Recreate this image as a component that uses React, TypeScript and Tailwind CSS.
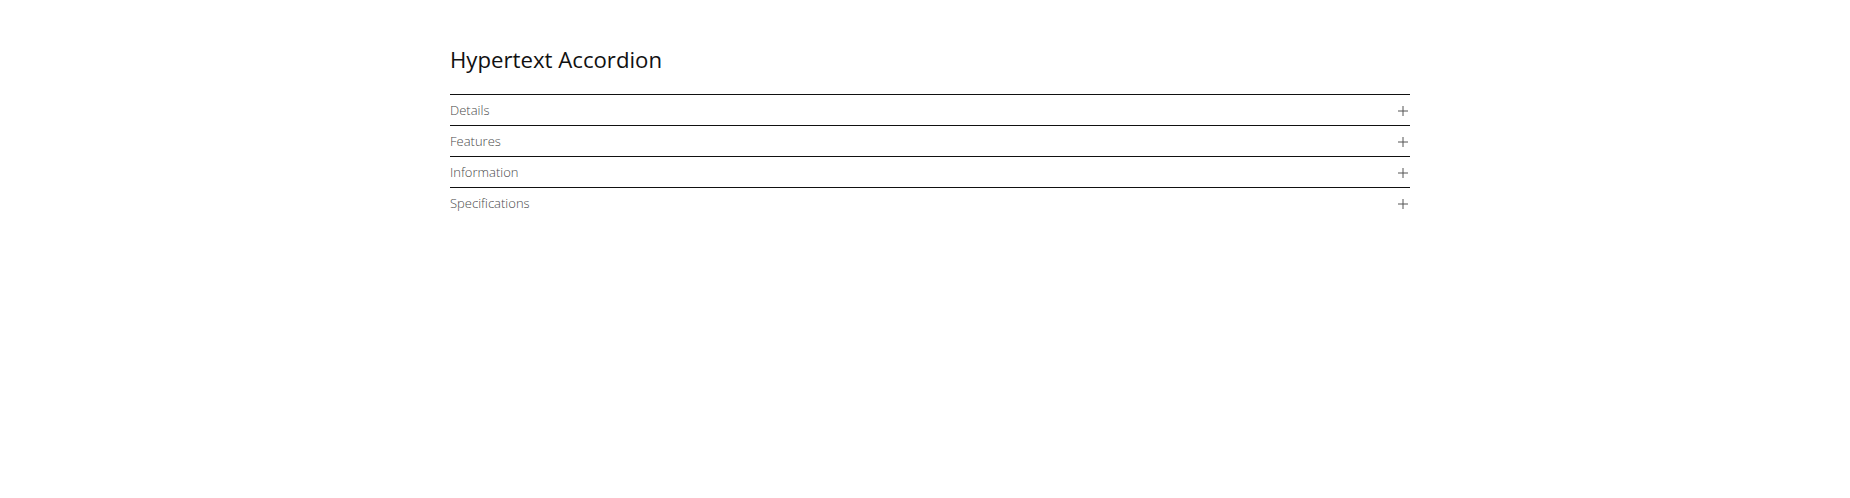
import { useState } from 'react'

const SECTIONS = ['Details', 'Features', 'Information', 'Specifications']

function PlusIcon() {
  return (
    <svg width="10" height="10" viewBox="0 0 10 10" className="shrink-0">
      <path d="M0 5h10M5 0v10" stroke="#555" strokeWidth="1" />
    </svg>
  )
}

export default function App() {
  const [open, setOpen] = useState<number | null>(null)

  return (
    <div className="min-h-screen bg-white font-['Open_Sans',sans-serif]">
      <div className="ml-[450px] w-[960px] pt-[45px]">
        <h1 className="text-[22.2px] leading-[30px] font-medium text-[#111]">Hypertext Accordion</h1>
        <div className="mt-[19px]">
          {SECTIONS.map((name, i) => (
            <div key={name} className="border-t-[1.5px] border-[#111]">
              <button
                onClick={() => setOpen(open === i ? null : i)}
                className="flex w-full items-center justify-between h-[30px] pt-[2px] text-left"
              >
                <span className="text-[13px] font-light text-[#4a4a4a]">{name}</span>
                <span className="pr-[2px]">
                  <PlusIcon />
                </span>
              </button>
              {open === i && (
                <div className="pb-3 text-[13px] font-light text-[#4a4a4a]">
                  Content for {name.toLowerCase()}.
                </div>
              )}
            </div>
          ))}
        </div>
      </div>
    </div>
  )
}
